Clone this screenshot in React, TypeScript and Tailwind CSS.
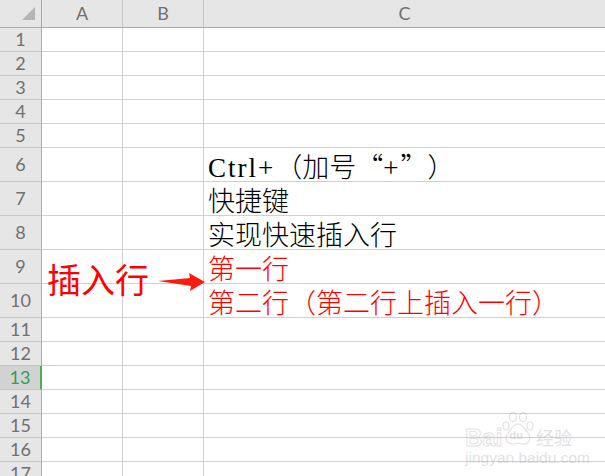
const latin = "text-[27px] leading-[0px] tracking-[2px] font-['Liberation_Serif',serif]";

const rows: { n: number; h: string; text?: React.ReactNode; red?: boolean }[] = [
  { n: 1, h: "h-6" },
  { n: 2, h: "h-6" },
  { n: 3, h: "h-6" },
  { n: 4, h: "h-6" },
  { n: 5, h: "h-6" },
  {
    n: 6,
    h: "h-[34px]",
    text: (
      <>
        <span className={latin}>Ctrl+</span>（加号“<span className={latin}>+</span>”）
      </>
    ),
  },
  { n: 7, h: "h-[34px]", text: "快捷键" },
  { n: 8, h: "h-[34px]", text: "实现快速插入行" },
  { n: 9, h: "h-[34px]", text: "第一行", red: true },
  { n: 10, h: "h-[34px]", text: "第二行（第二行上插入一行）", red: true },
  { n: 11, h: "h-6" },
  { n: 12, h: "h-6" },
  { n: 13, h: "h-6" },
  { n: 14, h: "h-6" },
  { n: 15, h: "h-6" },
  { n: 16, h: "h-6" },
  { n: 17, h: "h-6" },
];

const Watermark = () => (
  <div className="absolute left-[465px] top-[412px] w-[110px] text-[#b4b4b4] opacity-40 pointer-events-none">
    <div className="flex items-end h-[35px]">
      <span className="w-[37px] text-[24px] font-bold leading-[19px] text-transparent [-webkit-text-stroke:1px_#b4b4b4] font-['Liberation_Sans',sans-serif]">
        Bai
      </span>
      <svg width="32" height="35" viewBox="0 0 32 35">
        <g fill="none" stroke="currentColor" strokeWidth="1.2">
          <ellipse cx="4" cy="14" rx="3" ry="4" />
          <ellipse cx="11" cy="5" rx="3.5" ry="4.5" />
          <ellipse cx="21" cy="5" rx="3.5" ry="4.5" />
          <ellipse cx="28" cy="14" rx="3" ry="4" />
          <path d="M16 12c5 0 6 5 10 9 4 5 1 12-6 11-2 0-3-1-4-1s-2 1-5 1c-6 0-9-6-5-11 4-4 5-9 10-9z" />
        </g>
        <text x="7.5" y="27" fontSize="11" fontWeight="700" fill="currentColor" fontFamily="Liberation Sans">
          du
        </text>
      </svg>
      <span className="ml-[2px] text-[18px] leading-[19px] whitespace-nowrap font-['Noto_Sans_CJK_SC',sans-serif]">经验</span>
    </div>
    <div className="mt-[4px] text-[15.5px] leading-[14px] whitespace-nowrap font-['Liberation_Sans',sans-serif]">
      jingyan.baidu.com
    </div>
  </div>
);

export default function App() {
  return (
    <div className="relative w-[605px] h-[476px] overflow-hidden bg-white font-['Lato',sans-serif]">
      <div className="flex h-7">
        <div className="w-[42px] h-full bg-[#e6e6e6] border-r border-b border-[#ababab] flex items-end justify-end pb-[7px] pr-[6px]">
          <svg width="13" height="13" viewBox="0 0 13 13">
            <path d="M13 0V13H0Z" fill="#b4b4b4" />
          </svg>
        </div>
        {["A", "B"].map((c) => (
          <div
            key={c}
            className="w-[81px] h-full bg-[#e6e6e6] border-r border-b border-r-[#c6c6c6] border-b-[#ababab] flex items-center justify-center text-[18px] text-[#707070]"
          >
            {c}
          </div>
        ))}
        <div className="flex-1 h-full bg-[#e6e6e6] border-b border-[#ababab] flex items-center justify-center text-[18px] text-[#707070]">
          C
        </div>
      </div>
      {rows.map((r) => (
        <div key={r.n} className={`flex ${r.h}`}>
          <div
            className={
              r.n === 13
                ? "w-[42px] h-full bg-[#d2d2d2] border-r-2 border-r-[#4caf50] border-b border-b-[#c6c6c6] flex items-center justify-center text-[18px] text-[#2f9e57]"
                : "w-[42px] h-full bg-[#e6e6e6] border-r border-r-[#ababab] border-b border-b-[#c6c6c6] flex items-center justify-center text-[18px] text-[#707070]"
            }
          >
            {r.n}
          </div>
          <div className="w-[81px] h-full border-r border-b border-[#d0d0d0]" />
          <div className="w-[81px] h-full border-r border-b border-[#d0d0d0]" />
          <div
            lang="zh-CN"
            className={`flex-1 h-full border-b border-[#d0d0d0] flex items-end pb-[2px] pl-[4px] whitespace-nowrap text-[27px] leading-[27px] [text-spacing-trim:space-all] font-['Noto_Sans_CJK_SC',sans-serif] font-light ${
              r.red ? "text-[#ff0000]" : "text-black"
            }`}
          >
            <span className="block h-[27px]">{r.text}</span>
          </div>
        </div>
      ))}
      <div
        lang="zh-CN"
        className="absolute left-[47px] top-[257px] text-[34px] leading-[44px] whitespace-nowrap text-[#ff0000] font-['Noto_Sans_CJK_SC',sans-serif]"
      >
        插入行
      </div>
      <svg className="absolute left-[158px] top-[272px]" width="48" height="20" viewBox="0 0 48 20">
        <path d="M0 9L32 6L31 1L47 10L32 19L33 14Z" fill="#ff1a10" />
      </svg>
      <Watermark />
    </div>
  );
}
